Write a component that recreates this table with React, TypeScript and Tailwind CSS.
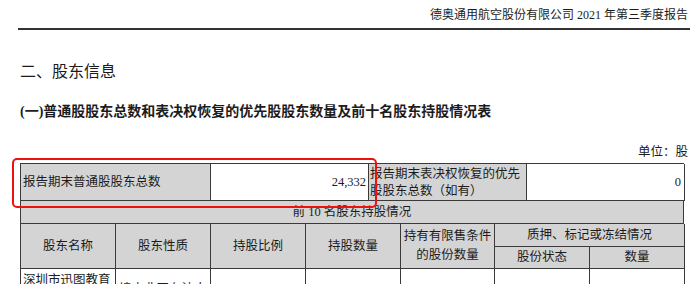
const font = { fontFamily: '"Liberation Serif", "Noto Sans CJK SC", serif' };

const grey = "bg-[#d4d4d4]";
const cell = "border-r border-b border-[#3a3a3a]";

export default function App() {
  return (
    <div className="h-[284px] w-[700px] overflow-hidden bg-white pl-[18px] pr-[10px] text-[#1c1c1c]" style={font}>
      <div className="flex h-[30px] items-end justify-end border-b-2 border-[#333] pb-[5px] pr-[2px] text-[12px] leading-[16px]">
        德奥通用航空股份有限公司 2021 年第三季度报告
      </div>

      <h2 className="mt-[30px] pl-[2px] text-[16px] leading-[24px]">二、股东信息</h2>
      <h3 className="mt-[18px] pl-[2px] text-[14px] font-bold leading-[20px]">
        (一)普通股股东总数和表决权恢复的优先股股东数量及前十名股东持股情况表
      </h3>
      <div className="mt-[22px] pr-[2px] text-right text-[12.5px] leading-[16px]">单位：股</div>

      <div className="relative ml-[2px] mt-[3px] w-[664px] border-l border-t border-[#3a3a3a] text-[12.5px]">
        <div className="grid grid-cols-[190px_158px_158px_158px]">
          <div className={`${cell} ${grey} flex h-[37px] items-center pl-[2px]`}>报告期末普通股股东总数</div>
          <div className={`${cell} flex h-[37px] items-center justify-end pr-[2px]`}>24,332</div>
          <div className={`${cell} ${grey} h-[37px] pl-[1px] pt-[2px] leading-[17px]`}>
            报告期末表决权恢复的优先股股东总数（如有）
          </div>
          <div className={`${cell} flex h-[37px] items-center justify-end pr-[3px]`}>0</div>
        </div>

        <div className={`${cell} ${grey} flex h-[23px] items-center justify-center`}>前 10 名股东持股情况</div>

        <div className="grid grid-cols-[95px_95px_95px_95px_94px_95px_95px] grid-rows-[23px_22px]">
          {["股东名称", "股东性质", "持股比例", "持股数量"].map((t) => (
            <div key={t} className={`${cell} ${grey} row-span-2 flex items-center justify-center`}>
              {t}
            </div>
          ))}
          <div className={`${cell} ${grey} row-span-2 flex items-center justify-center text-center leading-[19px]`}>
            持有有限售条件
            <br />
            的股份数量
          </div>
          <div className={`${cell} ${grey} col-span-2 flex items-center justify-center`}>质押、标记或冻结情况</div>
          <div className={`${cell} ${grey} flex items-center justify-center`}>股份状态</div>
          <div className={`${cell} ${grey} flex items-center justify-center`}>数量</div>
        </div>

        <div className="grid h-[40px] grid-cols-[95px_95px_95px_95px_94px_95px_95px] leading-[17px]">
          <div className={`${cell} pl-[2px] pt-[3px]`}>深圳市迅图教育咨询有限公司</div>
          <div className={`${cell} pl-[3px] pt-[12px]`}>境内非国有法人</div>
          <div className={`${cell} pr-[3px] pt-[12px] text-right`}>29.88%</div>
          <div className={`${cell} pr-[3px] pt-[12px] text-right`}>111,594,000</div>
          <div className={`${cell} pr-[3px] pt-[12px] text-right`}>111,594,000</div>
          <div className={cell} />
          <div className={cell} />
        </div>

        <div className="pointer-events-none absolute left-[-9px] top-[-6px] h-[50px] w-[365px] rounded-[5px] border-2 border-[#f01010]" />
      </div>
    </div>
  );
}
